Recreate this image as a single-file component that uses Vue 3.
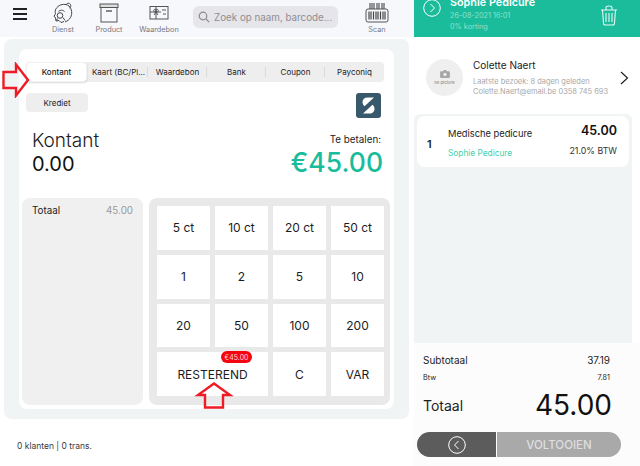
<template>
  <div class="pos-screen">
    <div class="left-side">
      <header class="top-bar">
        <div class="burger"><span></span><span></span><span></span></div>
        <div class="tool tool-dienst">
          <svg width="22" height="22" viewBox="0 0 22 22" fill="none" stroke="#444" stroke-width="1">
            <path d="M6 4.500c3-2.500 8-3 11-.5 3 3 3.500 8 1.500 11.500-1 2-3 3.500-5.500 4.500" />
            <path d="M14 3c.5-2 3.500-2.500 4.500-.5.7 1.500 0 3-1 3.500" />
            <path d="M6 4.500C3.500 6.500 2.500 9 3.500 11.500l-1.500 3 1.500 1 .5 3.500 3-.5 2 2 3-1" />
            <circle cx="8" cy="13.500" r="2.800" />
            <path d="M6.500 9.500c2-2 4.500-1.500 6 0M11 15.500l2 3M5.500 16.500l-1 2" />
          </svg>
          <span>Dienst</span>
        </div>
        <div class="tool tool-product">
          <svg width="20" height="20" viewBox="0 0 20 20" fill="none" stroke="#555" stroke-width="1">
            <rect x="1" y="1" width="18" height="3.500" fill="#ddd" />
            <rect x="2" y="4.500" width="16" height="14.500" />
            <path d="M7 8h6" stroke-width="1.400" />
          </svg>
          <span>Product</span>
        </div>
        <div class="tool tool-bon">
          <svg width="20" height="16" viewBox="0 0 20 16" fill="none" stroke="#555" stroke-width="1">
            <rect x="1" y="1.500" width="18" height="12.500" />
            <path d="M7 1.500v12.500M1 7h11M5 5c1-2 2-1 2 2-2 0-3-1-2-2zM9 5c-1-2-2-1-2 2 2 0 3-1 2-2zM7 7l-2 3M7 7l2 3M13 5h4M14 9h3" />
          </svg>
          <span>Waardebon</span>
        </div>
        <div class="search-box">
          <svg width="12" height="12" viewBox="0 0 12 12" fill="none" stroke="#8a8a90" stroke-width="1.200">
            <circle cx="5" cy="5" r="3.800" />
            <path d="M8 8l3.200 3.200" />
          </svg>
          <span>Zoek op naam, barcode...</span>
        </div>
        <div class="tool tool-scan">
          <svg width="24" height="22" viewBox="0 0 24 22" fill="none">
            <path d="M5 1v6M7 1v6M9 1v6M12 1v6M14 1v6M17 1v6M19 1v6" stroke="#555" stroke-width="1.200" />
            <rect x="1" y="7" width="22" height="13" rx="2" stroke="#555" stroke-width="1" />
            <path d="M4 9.500v8M6 9.500v8M8.500 9.500v8M11 9.500v8M13 9.500v8M15.500 9.500v8M18 9.500v8M20 9.500v8" stroke="#444" stroke-width="1.200" />
          </svg>
          <span>Scan</span>
        </div>
      </header>

      <main class="pay-panel">
        <div class="pay-card">
          <div class="method-tabs">
            <div
              v-for="tab in tabs"
              :key="tab"
              class="method-tab"
              :class="{ active: tab === 'Kontant' }"
            >{{ tab }}</div>
          </div>
          <div class="credit-row">
            <div class="credit-btn">Krediet</div>
            <div class="s-logo">
              <svg width="25" height="25" viewBox="0 0 25 25">
                <rect width="25" height="25" rx="3" fill="#37596b" />
                <path d="M18 4.500h-6.500c-3 0-5 2-5 4.500 0 1.700.7 3.200 2 4.200L18 4.500zM7 20.500h6.500c3 0 5-2 5-4.500 0-1.700-.7-3.200-2-4.200L7 20.500z" fill="#fff" />
              </svg>
            </div>
          </div>
          <div class="amount-row">
            <div>
              <div class="method-name">Kontant</div>
              <div class="method-value">0.00</div>
            </div>
            <div class="to-pay">
              <div class="to-pay-label">Te betalen:</div>
              <div class="to-pay-value">€45.00</div>
            </div>
          </div>
          <div class="pay-bottom">
            <div class="totals-box">
              <span>Totaal</span>
              <span class="totals-value">45.00</span>
            </div>
            <div class="keypad">
              <div
                v-for="key in keys"
                :key="key"
                class="key"
                :class="{ wide: key === 'RESTEREND' }"
              >
                {{ key }}
                <span v-if="key === 'RESTEREND'" class="rest-badge">€45.00</span>
              </div>
            </div>
          </div>
        </div>
      </main>

      <footer class="status-line">0 klanten | 0 trans.</footer>

      <svg class="red-arrow arrow-right" width="28" height="36" viewBox="0 0 28 36" fill="none" stroke="#ee1c25" stroke-width="2.400">
        <path d="M1.500 10h12.500V2.500L26 18 14 33.500V26H1.500z" />
      </svg>
      <svg class="red-arrow arrow-up" width="40" height="27" viewBox="0 0 40 27" fill="none" stroke="#ee1c25" stroke-width="2.400">
        <path d="M20 1.500L36 13H29v12.500H11V13H4z" />
      </svg>
    </div>

    <aside class="right-side">
      <div class="ticket-head">
        <svg class="head-circle" width="18" height="18" viewBox="0 0 18 18" fill="none" stroke="#fff" stroke-width="1">
          <circle cx="9" cy="9" r="8.300" />
          <path d="M7.500 5l4 4-4 4" />
        </svg>
        <div class="head-text">
          <div class="head-name">Sophie Pedicure</div>
          <div class="head-sub">26-08-2021 16:01</div>
          <div class="head-sub">0% korting</div>
        </div>
        <svg class="trash" width="18" height="21" viewBox="0 0 18 21" fill="none" stroke="#e8f8f4" stroke-width="1.100">
          <path d="M1 5h16M6 4.500V2.500c0-1 1-1.500 3-1.500s3 .5 3 1.500v2M2.500 5v0l1 13c0 1 1 2 2 2h7c1 0 2-1 2-2l1-13M6 8v9M9 8v9M12 8v9" />
        </svg>
      </div>

      <div class="customer">
        <div class="avatar">
          <svg width="10" height="8" viewBox="0 0 11 9">
            <path d="M1 1.500h2.500L4.300 0h2.400l.8 1.500H10a1 1 0 0 1 1 1V8a1 1 0 0 1-1 1H1a1 1 0 0 1-1-1V2.500a1 1 0 0 1 1-1z" fill="#a6a6a6" />
            <circle cx="5.500" cy="5" r="1.800" fill="#efefef" />
          </svg>
          <span>no picture</span>
        </div>
        <div class="customer-info">
          <div class="customer-name">Colette Naert</div>
          <div class="customer-sub">Laatste bezoek: 8 dagen geleden</div>
          <div class="customer-sub">Colette.Naert@email.be 0358 745 693</div>
        </div>
        <svg class="customer-chevron" width="9" height="14" viewBox="0 0 9 14" fill="none" stroke="#222" stroke-width="1.200">
          <path d="M1 1l6.500 6L1 13" />
        </svg>
      </div>

      <div class="line-list">
        <div class="line-item">
          <div class="line-qty">1</div>
          <div class="line-main">
            <div class="line-name">Medische pedicure</div>
            <div class="line-staff">Sophie Pedicure</div>
          </div>
          <div class="line-right">
            <div class="line-price">45.00</div>
            <div class="line-vat">21.0% BTW</div>
          </div>
        </div>
      </div>

      <div class="summary">
        <div class="sum-row sum-sub"><span>Subtotaal</span><span>37.19</span></div>
        <div class="sum-row sum-vat"><span>Btw</span><span>7.81</span></div>
        <div class="sum-row sum-total"><span>Totaal</span><span class="total-value">45.00</span></div>
        <div class="action-row">
          <div class="back-btn">
            <svg width="18" height="18" viewBox="0 0 18 18" fill="none" stroke="#fff" stroke-width="1">
              <circle cx="9" cy="9" r="8.300" />
              <path d="M10.500 5l-4 4 4 4" />
            </svg>
          </div>
          <div class="finish-btn">VOLTOOIEN</div>
        </div>
      </div>
    </aside>
  </div>
</template>

<script setup>
const tabs = ['Kontant', 'Kaart (BC/Pl...', 'Waardebon', 'Bank', 'Coupon', 'Payconiq']

const keys = [
  '5 ct', '10 ct', '20 ct', '50 ct',
  '1', '2', '5', '10',
  '20', '50', '100', '200',
  'RESTEREND', 'C', 'VAR'
]
</script>

<style>
html, body {
  margin: 0;
  background: #fff;
}
</style>

<style scoped>
.pos-screen {
  width: 640px;
  height: 466px;
  display: flex;
  overflow: hidden;
  font-family: Inter, "Liberation Sans", sans-serif;
  color: #1c1c1e;
}

.left-side {
  position: relative;
  width: 414px;
  flex-shrink: 0;
  display: flex;
  flex-direction: column;
}

.top-bar {
  position: relative;
  height: 37px;
  flex-shrink: 0;
  background: #f7f8fc;
}

.burger {
  position: absolute;
  left: 13px;
  top: 8px;
  width: 14px;
  display: flex;
  flex-direction: column;
  gap: 3.500px;
}

.burger span {
  height: 1.500px;
  background: #222;
}

.tool {
  position: absolute;
  top: 2px;
  width: 50px;
  display: flex;
  flex-direction: column;
  align-items: center;
  font-size: 7.300px;
  line-height: 9px;
  color: #77777c;
}

.tool svg {
  height: 22px;
  margin-bottom: 1px;
}

.tool-dienst { left: 38px; }
.tool-product { left: 84px; }
.tool-bon { left: 134px; }
.tool-scan { left: 352px; }

.search-box {
  position: absolute;
  left: 193px;
  top: 6px;
  width: 145px;
  height: 22px;
  box-sizing: border-box;
  padding-left: 5px;
  display: flex;
  align-items: center;
  gap: 4px;
  background: #e5e5ea;
  border-radius: 6px;
  font-size: 9.800px;
  color: #8e8e93;
  white-space: nowrap;
}

.pay-panel {
  width: 405px;
  height: 380px;
  margin: 2px 0 0 4px;
  box-sizing: border-box;
  padding: 10px 15px;
  background: #f0f4f4;
  border-radius: 8px;
}

.pay-card {
  height: 100%;
  box-sizing: border-box;
  padding: 13px 4px 4px 3px;
  background: #fff;
  border-radius: 8px;
  display: flex;
  flex-direction: column;
}

.method-tabs {
  display: flex;
  width: 358px;
  height: 20px;
  margin-left: 4px;
  background: #eeeeef;
  border-radius: 4px;
}

.method-tab {
  position: relative;
  flex: 1;
  min-width: 0;
  display: flex;
  align-items: center;
  justify-content: center;
  font-size: 8px;
  white-space: nowrap;
  box-sizing: border-box;
}

.method-tab:not(:last-child):not(.active)::after {
  content: "";
  position: absolute;
  right: 0;
  top: 5px;
  height: 10px;
  border-right: 1px solid #dcdcde;
}

.method-tab.active {
  font-weight: 500;
  margin-right: 2px;
  background: #fff;
  border: 1px solid #f2f2f2;
  border-radius: 4px;
  box-shadow: 0 1px 2px rgba(0, 0, 0, 0.15);
}

.credit-row {
  display: flex;
  justify-content: space-between;
  margin: 11px 9px 0 4px;
}

.credit-btn {
  width: 62px;
  height: 19px;
  display: flex;
  align-items: center;
  justify-content: center;
  font-size: 8px;
  background: #eeeeef;
  border-radius: 4px;
}

.s-logo {
  height: 25px;
}

.amount-row {
  display: flex;
  justify-content: space-between;
  align-items: flex-end;
  height: 44px;
  margin: 14px 7px 0 10px;
}

.method-name {
  font-size: 19px;
  font-weight: 300;
  line-height: 22px;
}

.method-value {
  font-size: 20px;
  font-weight: 400;
  line-height: 24px;
  color: #111;
}

.to-pay {
  text-align: right;
}

.to-pay-label {
  font-size: 9.800px;
  line-height: 12px;
  padding-right: 2px;
}

.to-pay-value {
  position: relative;
  top: 1px;
  font-size: 26.500px;
  font-weight: 500;
  line-height: 30px;
  color: #1abc9c;
}

.pay-bottom {
  flex: 1;
  display: flex;
  gap: 6px;
  margin-top: 22px;
}

.totals-box {
  width: 121px;
  box-sizing: border-box;
  padding: 7px 10px;
  display: flex;
  justify-content: space-between;
  align-items: flex-start;
  background: #f0f0f0;
  border-radius: 8px;
  font-size: 9.800px;
}

.totals-value {
  color: #9a9a9a;
  font-size: 9.800px;
}

.keypad {
  flex: 1;
  box-sizing: border-box;
  padding: 8px 6px 9px 8px;
  display: grid;
  grid-template-columns: repeat(4, 53px);
  grid-template-rows: repeat(4, 1fr);
  gap: 5px;
  background: #e9e9e9;
  border-radius: 8px;
}

.key {
  position: relative;
  display: flex;
  align-items: center;
  justify-content: center;
  background: #fff;
  font-size: 12px;
  color: #1c1c1e;
}

.key.wide {
  grid-column: span 2;
}

.rest-badge {
  position: absolute;
  left: 64px;
  top: -1px;
  width: 31px;
  height: 12px;
  display: flex;
  align-items: center;
  justify-content: center;
  background: #f5050f;
  border-radius: 6px;
  color: #ffd9d9;
  font-size: 7px;
}

.status-line {
  margin: 22px 0 0 17px;
  font-size: 8.500px;
  color: #3a3a3c;
}

.red-arrow {
  position: absolute;
}

.arrow-right {
  left: 2px;
  top: 62px;
}

.arrow-up {
  left: 194px;
  top: 382px;
}

.right-side {
  width: 226px;
  flex-shrink: 0;
  display: flex;
  flex-direction: column;
}

.ticket-head {
  position: relative;
  height: 37px;
  flex-shrink: 0;
  background: #1abc9c;
  color: #fff;
}

.head-circle {
  position: absolute;
  left: 9px;
  top: -1px;
}

.head-text {
  position: absolute;
  left: 36px;
  top: -4px;
}

.head-name {
  font-size: 10.800px;
  font-weight: 600;
  line-height: 14px;
}

.head-sub {
  font-size: 7.300px;
  line-height: 11px;
  color: #8fe0cd;
}

.trash {
  position: absolute;
  left: 186px;
  top: 5px;
}

.customer {
  height: 77px;
  flex-shrink: 0;
  display: flex;
  align-items: center;
  box-sizing: border-box;
  padding: 4px 0 0 12px;
}

.avatar {
  width: 37px;
  height: 37px;
  flex-shrink: 0;
  border-radius: 50%;
  background: #efefef;
  display: flex;
  flex-direction: column;
  align-items: center;
  justify-content: center;
  gap: 2px;
  font-size: 4.200px;
  font-weight: 600;
  color: #9a9a9a;
}

.customer-info {
  margin-left: 10px;
  width: 141px;
  white-space: nowrap;
}

.customer-name {
  font-size: 10px;
  line-height: 14px;
  margin-bottom: 5px;
}

.customer-sub {
  font-size: 7.450px;
  line-height: 10.500px;
  color: #a8a8a8;
}

.customer-chevron {
  margin-left: 6px;
}

.line-list {
  flex: 1;
  margin-right: 8px;
  padding: 2px 3px;
  background: #f0f4f4;
  border-radius: 6px 6px 0 0;
}

.line-item {
  height: 51px;
  box-sizing: border-box;
  padding: 5px 12px 0 10px;
  display: flex;
  background: #fff;
  border-radius: 8px;
}

.line-qty {
  width: 21px;
  align-self: center;
  font-size: 11px;
  font-weight: 600;
}

.line-main {
  flex: 1;
  font-size: 9.300px;
  line-height: 14px;
  padding-top: 6px;
}

.line-staff {
  margin-top: 5px;
  font-size: 8.300px;
  color: #3ecfae;
}

.line-right {
  text-align: right;
}

.line-price {
  font-size: 12.500px;
  font-weight: 600;
  line-height: 20px;
  color: #111;
}

.line-vat {
  margin-top: 3px;
  font-size: 8.800px;
  line-height: 14px;
  color: #333;
}

.summary {
  height: 123px;
  flex-shrink: 0;
  box-sizing: border-box;
  padding: 10px 0 0 3px;
  background: #fcfcfc;
}

.sum-row {
  display: flex;
  justify-content: space-between;
  padding: 0 30px 0 6px;
}

.sum-sub {
  font-size: 10px;
  line-height: 15px;
}

.sum-vat {
  margin-top: 4px;
  font-size: 7.200px;
  line-height: 11px;
}

.sum-total {
  margin-top: 4px;
  align-items: center;
  padding-right: 28px;
  font-size: 14px;
}

.total-value {
  font-size: 28px;
  font-weight: 400;
  line-height: 36px;
  color: #111;
}

.action-row {
  display: flex;
  gap: 1px;
  width: 204px;
  height: 25px;
  margin-top: 9px;
}

.back-btn {
  width: 79px;
  display: flex;
  align-items: center;
  justify-content: center;
  background: #5c5c5c;
  border-radius: 12.500px 0 0 12.500px;
}

.finish-btn {
  flex: 1;
  display: flex;
  align-items: center;
  justify-content: center;
  background: #a9a9a9;
  border-radius: 0 12.500px 12.500px 0;
  color: #dedede;
  font-size: 11.500px;
  font-weight: 500;
}
</style>
